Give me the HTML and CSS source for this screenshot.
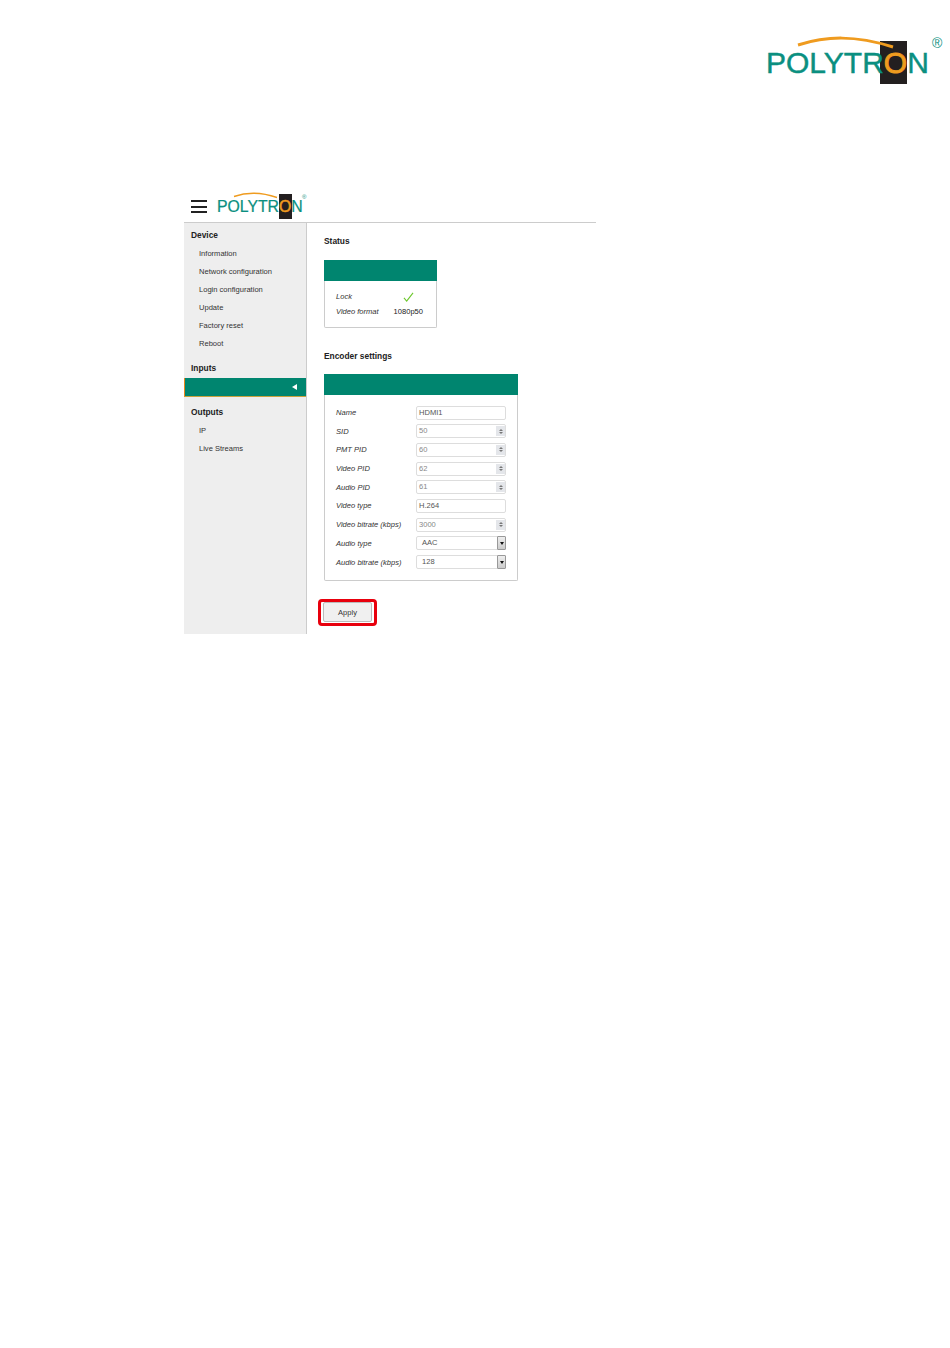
FILE: index.html
```html
<!DOCTYPE html>
<html lang="en">
<head>
<meta charset="utf-8">
<title>Polytron encoder settings</title>
<link rel="stylesheet" href="styles.css">
</head>
<body>
<header class="page-head">
  <div class="logo logo-large">
    <span class="logo-text">POLYTR<span class="logo-o">O</span>N</span>
    <svg class="logo-arc" viewBox="0 0 100 12" preserveAspectRatio="none"><path d="M0 9C30 0 60-1 100 11" fill="none" stroke="#ef9b1f" stroke-width="3"/></svg>
    <span class="logo-reg">®</span>
  </div>
</header>
<div class="app">
  <div class="app-bar">
    <div class="burger"><span></span><span></span><span></span></div>
    <div class="logo logo-small">
      <span class="logo-text">POLYTR<span class="logo-o">O</span>N</span>
      <svg class="logo-arc" viewBox="0 0 100 12" preserveAspectRatio="none"><path d="M0 9C30 0 60-1 100 11" fill="none" stroke="#ef9b1f" stroke-width="3"/></svg>
      <span class="logo-reg">®</span>
    </div>
  </div>
  <div class="app-body">
    <nav class="side">
      <h3 class="side-title">Device</h3>
      <a class="side-item">Information</a>
      <a class="side-item">Network configuration</a>
      <a class="side-item">Login configuration</a>
      <a class="side-item">Update</a>
      <a class="side-item">Factory reset</a>
      <a class="side-item">Reboot</a>
      <h3 class="side-title side-title-gap">Inputs</h3>
      <div class="side-active"><span class="side-caret"></span></div>
      <h3 class="side-title side-title-outputs">Outputs</h3>
      <a class="side-item">IP</a>
      <a class="side-item">Live Streams</a>
    </nav>
    <main class="content">
      <h2 class="section-title">Status</h2>
      <section class="panel panel-status">
        <div class="panel-head"></div>
        <div class="status-body">
          <div class="status-row">
            <span class="label">Lock</span>
            <svg class="check" viewBox="0 0 12 11"><path d="M1 6.5 4 10 11 1" fill="none" stroke="#6cc72c" stroke-width="1.2"/></svg>
          </div>
          <div class="status-row">
            <span class="label">Video format</span>
            <span class="value">1080p50</span>
          </div>
        </div>
      </section>
      <h2 class="section-title section-title-enc">Encoder settings</h2>
      <section class="panel panel-encoder">
        <div class="panel-head"></div>
        <div class="form">
          <span class="label">Name</span><div class="field">HDMI1</div>
          <span class="label">SID</span><div class="field muted">50<span class="spin"><i class="up"></i><i class="down"></i></span></div>
          <span class="label">PMT PID</span><div class="field muted">60<span class="spin"><i class="up"></i><i class="down"></i></span></div>
          <span class="label">Video PID</span><div class="field muted">62<span class="spin"><i class="up"></i><i class="down"></i></span></div>
          <span class="label">Audio PID</span><div class="field muted">61<span class="spin"><i class="up"></i><i class="down"></i></span></div>
          <span class="label">Video type</span><div class="field">H.264</div>
          <span class="label">Video bitrate (kbps)</span><div class="field muted">3000<span class="spin"><i class="up"></i><i class="down"></i></span></div>
          <span class="label">Audio type</span><div class="field select">AAC<span class="drop"><i></i></span></div>
          <span class="label">Audio bitrate (kbps)</span><div class="field select">128<span class="drop"><i></i></span></div>
        </div>
      </section>
      <div class="apply-mark"><button class="apply" type="button">Apply</button></div>
    </main>
  </div>
</div>
</body>
</html>
```
FILE: styles.css
```css
* { box-sizing: border-box; }
html, body { margin: 0; padding: 0; background: #fff; }
body {
  width: 950px;
  height: 1348px;
  overflow: hidden;
  font-family: "Liberation Sans", Arial, sans-serif;
  color: #222;
}

/* Logo */
.page-head {
  height: 190px;
  padding: 42px 0 0 766px;
}
.logo {
  position: relative;
  display: inline-block;
  white-space: nowrap;
  line-height: 1;
}
.logo-text {
  position: relative;
  color: #0b8f80;
  -webkit-text-stroke: 0.015em #0b8f80;
}
.logo-o {
  position: relative;
  color: #ef9b1f;
  -webkit-text-stroke: 0.03em #ef9b1f;
}
.logo-o::before {
  content: "";
  position: absolute;
  z-index: -1;
  background: #231f20;
}
.logo-arc {
  position: absolute;
  display: block;
  overflow: visible;
}
.logo-reg {
  position: absolute;
  color: #0b8f80;
}
.logo-large { font-size: 30px; height: 43px; padding-top: 6px; isolation: isolate; }
.logo-large .logo-o::before { left: -4px; right: 0; top: -5px; bottom: -5px; }
.logo-large .logo-arc { left: 32px; top: -6px; width: 95px; height: 12px; }
.logo-large .logo-reg { left: 166px; top: -6px; font-size: 14px; }

.logo-small { font-size: 15.8px; height: 25px; padding-top: 5px; isolation: isolate; }
.logo-small .logo-o::before { left: 0; right: -1px; top: -4px; bottom: -4px; }
.logo-small .logo-arc { left: 17px; top: -2px; width: 43px; height: 6px; }
.logo-small .logo-reg { left: 85px; top: 0; font-size: 6px; }

/* App frame */
.app {
  width: 412px;
  margin-left: 184px;
}
.app-bar {
  height: 33px;
  display: flex;
  align-items: flex-start;
  gap: 10px;
  padding: 4px 0 0 7px;
  border-bottom: 1px solid #ccc;
}
.burger {
  display: flex;
  flex-direction: column;
  gap: 3.5px;
  width: 16px;
  margin-top: 6px;
}
.burger span {
  display: block;
  height: 2px;
  background: #222;
}
.app-body {
  display: flex;
  height: 411px;
}

/* Sidebar */
.side {
  display: flex;
  flex-direction: column;
  width: 123px;
  flex: none;
  background: #eee;
  border-right: 1px solid #ccc;
  padding-top: 7px;
}
.side-title {
  margin: 0 0 1.5px;
  padding-left: 7px;
  font-size: 8.4px;
  line-height: 10px;
  font-weight: bold;
  color: #222;
}
.side-title-gap { margin-top: 14.6px; }
.side-title-outputs { margin-top: 10px; }
.side-item {
  display: block;
  padding-left: 15px;
  font-size: 7.55px;
  line-height: 10px;
  margin-top: 7.9px;
  color: #333;
}
.side-active {
  display: flex;
  align-items: center;
  justify-content: flex-end;
  flex: none;
  height: 19px;
  margin-top: 3px;
  padding-right: 9px;
  background: #00856f;
  border-left: 1px solid #e8871e;
  border-bottom: 1px solid #c9a23c;
}
.side-caret {
  width: 0;
  height: 0;
  border-style: solid;
  border-width: 3.5px 5px 3.5px 0;
  border-color: transparent #fff transparent transparent;
}

/* Content */
.content {
  flex: 1;
  padding: 13px 0 0 17px;
}
.section-title {
  margin: 0;
  font-size: 8.4px;
  line-height: 10px;
  font-weight: bold;
  color: #222;
}
.section-title-enc { margin-top: 22.5px; }
.panel {
  border: 1px solid #ccc;
  border-top: 0;
  border-radius: 0 0 2px 2px;
}
.panel-head {
  height: 21px;
  margin: 0 -1px;
  background: #00856f;
}
.panel-status {
  width: 113px;
  height: 68px;
  margin-top: 14px;
}
.panel-encoder {
  width: 194px;
  height: 207px;
  margin-top: 13.5px;
}
.label {
  font-size: 7.55px;
  font-style: italic;
  color: #333;
  white-space: nowrap;
}
.value {
  font-size: 7.55px;
  color: #222;
}
.status-body {
  padding: 8px 13px 0 11px;
}
.status-row {
  display: flex;
  align-items: center;
  justify-content: space-between;
  height: 15px;
}
.check {
  width: 11px;
  height: 10px;
  margin-right: 9px;
}

/* Form */
.form {
  display: grid;
  grid-template-columns: 80px 90px;
  grid-auto-rows: 14px;
  row-gap: 4.7px;
  align-items: center;
  padding: 10.5px 0 0 11px;
}
.field {
  position: relative;
  height: 14px;
  padding-left: 2px;
  border: 1px solid #ddd;
  border-radius: 2px;
  background: #fff;
  font-size: 7.55px;
  line-height: 12px;
  color: #555;
}
.muted { color: #888; }
.select { padding-left: 5px; }
.spin {
  position: absolute;
  top: 1px;
  right: 0;
  bottom: 1px;
  width: 9px;
  display: flex;
  flex-direction: column;
  align-items: center;
  justify-content: center;
  gap: 1px;
  background: #e4e6ea;
}
.spin i {
  width: 0;
  height: 0;
  border-left: 2px solid transparent;
  border-right: 2px solid transparent;
}
.spin .up { border-bottom: 2px solid #777; }
.spin .down { border-top: 2px solid #777; }
.drop {
  position: absolute;
  top: -1px;
  right: -1px;
  bottom: -1px;
  width: 9px;
  display: flex;
  align-items: center;
  justify-content: center;
  background: linear-gradient(#eee, #ccc);
  border: 1px solid #999;
  border-radius: 1px;
}
.drop i {
  width: 0;
  height: 0;
  border-left: 2px solid transparent;
  border-right: 2px solid transparent;
  border-top: 3px solid #111;
}

/* Apply */
.apply-mark {
  display: inline-block;
  margin: 18px 0 0 -6px;
  padding: 0 2px;
  width: 59px;
  height: 27px;
  border: 3px solid #e8000d;
  border-radius: 4px;
}
.apply {
  display: block;
  width: 49px;
  height: 20px;
  margin: 0;
  padding: 0;
  background: #f0f0f0;
  border: 1px solid #bbb;
  border-radius: 2px;
  font-family: "Liberation Sans", Arial, sans-serif;
  font-size: 7.55px;
  color: #333;
}
```
